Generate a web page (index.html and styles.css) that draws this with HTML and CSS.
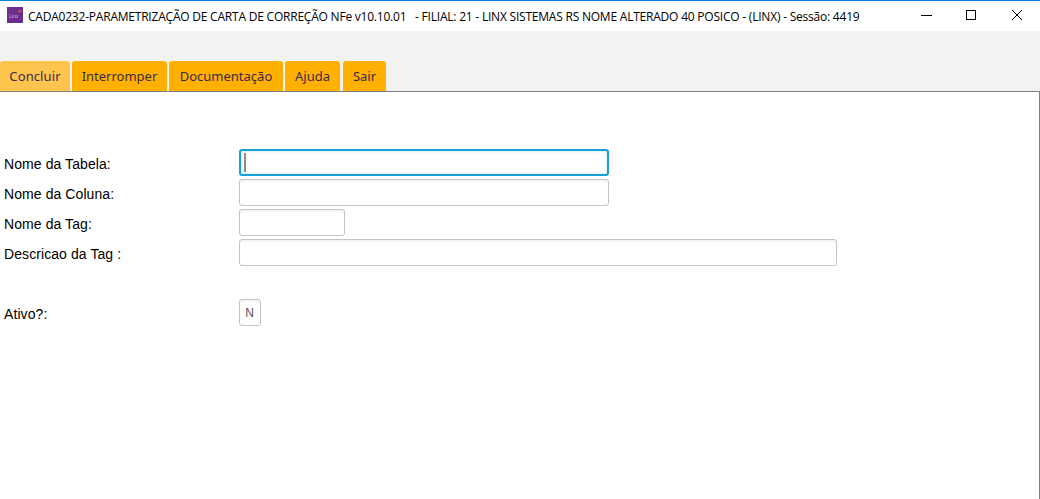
FILE: index.html
```html
<!DOCTYPE html>
<html lang="pt-BR">
<head>
  <meta charset="UTF-8">
  <meta name="viewport" content="width=device-width, initial-scale=1.0">
  <title>CADA0232</title>
  <link rel="stylesheet" href="styles.css">
</head>
<body>

  <header class="titlebar">
    <svg class="app-icon" width="16" height="16" viewBox="0 0 16 16">
      <rect width="16" height="16" fill="#6b2d90"/>
      <text x="2" y="10.5" class="app-icon-text">Linx</text>
      <path d="M11.5 3l2.5 2.5M14 3l-2.5 2.5" stroke="#f26a21" stroke-width="1"/>
    </svg>
    <span class="title-text">CADA0232-PARAMETRIZAÇÃO DE CARTA DE CORREÇÃO NFe v10.10.01&nbsp;&nbsp; - FILIAL: 21 - LINX SISTEMAS RS NOME ALTERADO 40 POSICO - (LINX) - Sessão: 4419</span>
    <div class="window-buttons">
      <svg class="win-btn" width="46" height="30" viewBox="0 0 46 30"><path d="M19 14.5h11" stroke="#000" fill="none"/></svg>
      <svg class="win-btn" width="46" height="30" viewBox="0 0 46 30"><rect x="18.5" y="9.5" width="9" height="9" stroke="#000" fill="none"/></svg>
      <svg class="win-btn" width="46" height="30" viewBox="0 0 46 30"><path d="M18 9l10 10M28 9l-10 10" stroke="#000" fill="none"/></svg>
    </div>
  </header>

  <nav class="toolbar">
    <a class="tab tab-active tab-concluir">Concluir</a>
    <a class="tab tab-interromper">Interromper</a>
    <a class="tab tab-doc">Documentação</a>
    <a class="tab tab-ajuda">Ajuda</a>
    <a class="tab tab-sair">Sair</a>
  </nav>

  <main class="content">
    <form class="form">
      <div class="row">
        <label class="row-label">Nome da Tabela:</label>
        <div class="field">
          <input class="input input-focus input-table" type="text">
          <span class="caret"></span>
        </div>
      </div>
      <div class="row">
        <label class="row-label">Nome da Coluna:</label>
        <input class="input input-table" type="text">
      </div>
      <div class="row">
        <label class="row-label">Nome da Tag:</label>
        <input class="input input-tag" type="text">
      </div>
      <div class="row">
        <label class="row-label">Descricao da Tag :</label>
        <input class="input input-desc" type="text">
      </div>
      <div class="row row-gap">
        <label class="row-label">Ativo?:</label>
        <input class="input input-flag" type="text" value="N">
      </div>
    </form>
  </main>

</body>
</html>
```

FILE: styles.css
```css
html, body {
  height: 100%;
}

body {
  margin: 0;
  padding: 0;
  display: flex;
  flex-direction: column;
  overflow: hidden;
  background-color: #f2f2f2;
  font-family: "Liberation Sans", Arial, sans-serif;
}

.titlebar {
  height: 30px;
  border-top: 1px solid #0d83dd;
  background-color: #fff;
  display: flex;
  align-items: center;
  flex-shrink: 0;
}

.app-icon {
  margin-left: 7px;
  margin-right: 5px;
  margin-bottom: 2px;
}

.app-icon-text {
  font-family: "Liberation Sans", Arial, sans-serif;
  font-size: 5px;
  fill: #c9b3d9;
}

.title-text {
  font-family: "Open Sans", sans-serif;
  font-size: 12px;
  letter-spacing: -0.215px;
  color: #000;
  white-space: nowrap;
}

.window-buttons {
  margin-left: auto;
  display: flex;
}

.win-btn {
  display: block;
}

.toolbar {
  height: 30px;
  padding-top: 30px;
  display: flex;
  gap: 2px;
  flex-shrink: 0;
}

.tab {
  box-sizing: border-box;
  text-align: center;
  line-height: 31px;
  background-color: #ffb000;
  border-radius: 3px 3px 0 0;
  font-family: "Noto Sans", sans-serif;
  font-size: 13px;
  color: #3c2a4d;
}

.tab-active {
  background-color: #ffc44d;
}

.tab-concluir {
  width: 70px;
  letter-spacing: 0.1px;
}

.tab-interromper {
  width: 95px;
}

.tab-doc {
  width: 114px;
}

.tab-ajuda {
  width: 55px;
}

.tab-sair {
  width: 43px;
  margin-left: 1px;
}

.content {
  flex: 1;
  background-color: #fff;
  border-top: 1px solid #808080;
  border-right: 1px solid #808080;
  padding: 57px 0 0 4px;
}

.form {
  display: flex;
  flex-direction: column;
  gap: 3px;
}

.row {
  display: flex;
  align-items: center;
  height: 27px;
}

.row-gap {
  margin-top: 30px;
}

.row-label {
  width: 235px;
  flex-shrink: 0;
  padding-top: 2px;
  font-size: 14px;
  letter-spacing: 0.08px;
  color: #000;
}

.field {
  position: relative;
  display: flex;
}

.input {
  box-sizing: border-box;
  height: 27px;
  margin: 0;
  padding: 0 4px;
  border: 1px solid #c4c4c4;
  border-radius: 3px;
  outline: none;
  box-shadow: inset 0 2px 2px rgba(0, 0, 0, 0.05);
  font-family: "Liberation Sans", Arial, sans-serif;
  font-size: 12px;
  color: #555;
}

.input-focus {
  border: 2px solid #18a0d8;
  box-shadow: inset 0 0 3px rgba(24, 160, 216, 0.3);
}

.input-table {
  width: 370px;
}

.input-tag {
  width: 106px;
}

.input-desc {
  width: 598px;
}

.input-flag {
  width: 22px;
  text-align: center;
  padding: 0 1px 0 0;
}

.caret {
  position: absolute;
  left: 5px;
  top: 4px;
  width: 2px;
  height: 19px;
  background-color: #8c8c8c;
}
```
